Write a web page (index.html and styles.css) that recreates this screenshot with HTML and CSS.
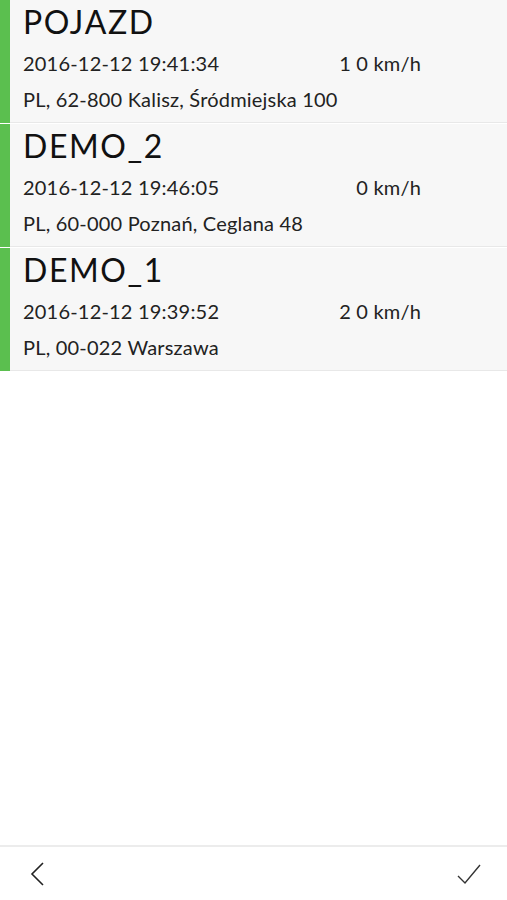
FILE: index.html
```html
<!DOCTYPE html>
<html lang="pl">
<head>
    <meta charset="UTF-8">
    <meta name="viewport" content="width=device-width, initial-scale=1.0">
    <title>Pojazdy</title>
    <link rel="stylesheet" href="styles.css">
</head>
<body>

<div class="list">
    <div class="vehicle">
        <div class="status"></div>
        <div class="info">
            <div class="name">POJAZD</div>
            <div class="meta">
                <span>2016-12-12 19:41:34</span>
                <span>1 0 km/h</span>
            </div>
            <div class="address">PL, 62-800 Kalisz, Śródmiejska 100</div>
        </div>
    </div>

    <div class="vehicle">
        <div class="status"></div>
        <div class="info">
            <div class="name">DEMO_2</div>
            <div class="meta">
                <span>2016-12-12 19:46:05</span>
                <span>0 km/h</span>
            </div>
            <div class="address">PL, 60-000 Poznań, Ceglana 48</div>
        </div>
    </div>

    <div class="vehicle">
        <div class="status"></div>
        <div class="info">
            <div class="name">DEMO_1</div>
            <div class="meta">
                <span>2016-12-12 19:39:52</span>
                <span>2 0 km/h</span>
            </div>
            <div class="address">PL, 00-022 Warszawa</div>
        </div>
    </div>
</div>

<div class="toolbar">
    <button class="tool" type="button" aria-label="Wstecz">
        <svg width="16" height="24" viewBox="0 0 16 24">
            <path d="M13 1 L2 12 L13 23" fill="none" stroke="#222" stroke-width="1.6"/>
        </svg>
    </button>
    <button class="tool" type="button" aria-label="OK">
        <svg width="24" height="22" viewBox="0 0 24 22">
            <path d="M1 13 L8 20 L23 2" fill="none" stroke="#333" stroke-width="1.4"/>
        </svg>
    </button>
</div>

</body>
</html>
```

FILE: styles.css
```css
body {
    font-family: Lato, "Noto Sans", sans-serif;
    background-color: #fff;
    color: #1a1a1a;
    margin: 0;
    height: 100vh;
    display: flex;
    flex-direction: column;
}

.list {
    flex: 1;
}

.vehicle {
    display: flex;
    height: 123px;
    margin-bottom: 1px;
    background-color: #f7f7f7;
}

.status {
    width: 10px;
    background-color: #5bbf4f;
}

.info {
    flex: 1;
    padding-left: 13px;
    border-bottom: 1px solid #e8e8e8;
}

.name {
    font-size: 32px;
    line-height: 44px;
    letter-spacing: 1.6px;
    color: #111;
}

.meta {
    width: 398px;
    display: flex;
    justify-content: space-between;
    font-size: 20px;
    line-height: 38px;
    letter-spacing: 0.2px;
    color: #222;
}

.address {
    font-size: 20px;
    line-height: 34px;
    letter-spacing: 0.2px;
    color: #222;
}

.toolbar {
    height: 53px;
    border-top: 2px solid #ececec;
    display: flex;
    justify-content: space-between;
    align-items: center;
    padding: 0 26px 0 30px;
}

.tool {
    background: none;
    border: 0;
    padding: 0;
    display: flex;
}
```
